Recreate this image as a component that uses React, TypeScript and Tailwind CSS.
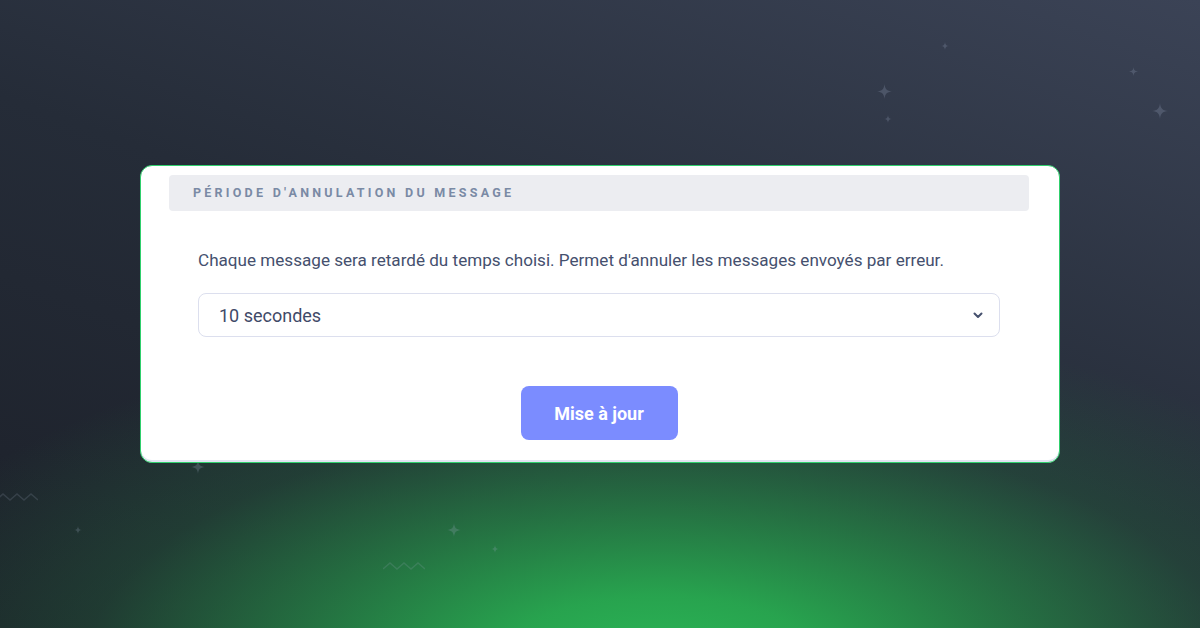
import { useState } from 'react';

type Sparkle = { x: number; y: number; s: number };

const sparkles: Sparkle[] = [
  { x: 884, y: 91, s: 15 },
  { x: 888, y: 119, s: 8 },
  { x: 945, y: 46, s: 8 },
  { x: 1133, y: 71, s: 9 },
  { x: 1160, y: 111, s: 16 },
  { x: 198, y: 467, s: 14 },
  { x: 78, y: 530, s: 8 },
  { x: 454, y: 530, s: 14 },
  { x: 495, y: 549, s: 8 },
];

// decorative sparkle in the background
function Star({ x, y, s }: Sparkle) {
  return (
    <svg
      className="absolute pointer-events-none"
      style={{ left: x - s / 2, top: y - s / 2, width: s, height: s }}
      viewBox="0 0 20 20"
    >
      <path
        d="M10 0 C10.8 7 13 9.2 20 10 C13 10.8 10.8 13 10 20 C9.2 13 7 10.8 0 10 C7 9.2 9.2 7 10 0 Z"
        fill="rgba(160,172,196,0.24)"
      />
    </svg>
  );
}

function Zigzag({ x, y }: { x: number; y: number }) {
  return (
    <svg
      className="absolute pointer-events-none"
      style={{ left: x, top: y, width: 42, height: 10 }}
      viewBox="0 0 42 10"
    >
      <path
        d="M0 8 L7 2 L14 8 L21 2 L28 8 L35 2 L42 8"
        fill="none"
        stroke="rgba(160,172,196,0.18)"
        strokeWidth="1.6"
      />
    </svg>
  );
}

export default function App() {
  const [delay, setDelay] = useState('10');

  return (
    <div className="relative w-[1200px] h-[628px] overflow-hidden flex justify-center items-start pt-[165px] bg-[radial-gradient(ellipse_820px_350px_at_55%_106%,#2bb757_0%,rgba(40,170,80,0.95)_20%,rgba(38,140,72,0.72)_45%,rgba(36,100,62,0.38)_70%,transparent_100%),linear-gradient(20deg,#1c2029_0%,#252c38_50%,#3b4356_100%)] font-['Roboto',_'Liberation_Sans',_sans-serif]">
      {sparkles.map((sp, i) => (
        <Star key={i} {...sp} />
      ))}
      <Zigzag x={-4} y={492} />
      <Zigzag x={383} y={561} />

      <div className="relative w-[920px] rounded-[12px] border border-[#2fcf6c] bg-white pl-[28px] pr-[30px] pt-[9px] pb-[22px] shadow-[inset_0_-2px_0_#e2e4f2]">
        <div className="h-[36px] rounded-[4px] bg-[#ecedf1] px-[24px] flex items-center">
          <span className="text-[12.5px] font-bold tracking-[0.26em] text-[#7a8aa5] uppercase">
            Période d'annulation du message
          </span>
        </div>

        <div className="px-[29px] flex flex-col">
          <p className="mt-[37px] text-[17.1px] leading-[24px] text-[#45506e]">
            Chaque message sera retardé du temps choisi. Permet d'annuler les messages envoyés par erreur.
          </p>

          <div className="relative mt-[21px]">
            <select
              value={delay}
              onChange={(e) => setDelay(e.target.value)}
              className="w-full h-[44px] appearance-none rounded-[8px] border border-[#dcdfee] bg-white pl-[20px] pr-[40px] text-[18px] text-[#3f4a68] outline-none"
            >
              <option value="0">Désactivé</option>
              <option value="5">5 secondes</option>
              <option value="10">10 secondes</option>
              <option value="20">20 secondes</option>
              <option value="30">30 secondes</option>
            </select>
            <svg
              className="absolute right-[16px] top-1/2 -translate-y-1/2 pointer-events-none"
              width="12"
              height="12"
              viewBox="0 0 12 12"
            >
              <path d="M2.5 4.5 L6 8 L9.5 4.5" fill="none" stroke="#46516e" strokeWidth="2" strokeLinecap="round" strokeLinejoin="round" />
            </svg>
          </div>

          <div className="mt-[49px] flex justify-center">
            <button className="w-[157px] h-[54px] rounded-[8px] bg-[#7b8cff] text-white text-[18px] font-bold">
              Mise à jour
            </button>
          </div>
        </div>
      </div>
    </div>
  );
}
